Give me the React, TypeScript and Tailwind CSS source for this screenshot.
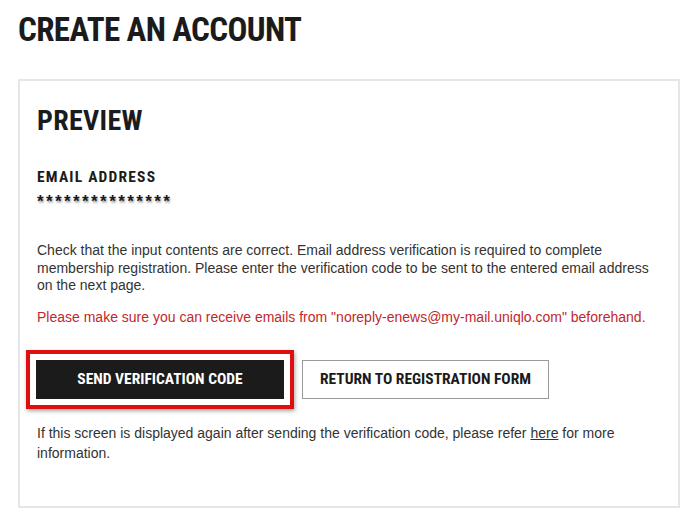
export default function App() {
  return (
    <div className="min-h-[527px] w-[700px] bg-white">
      <div className="px-[18px] pt-[13px]">
        <h1 className="font-['Roboto_Condensed',Roboto,sans-serif] text-[33px] font-bold leading-[34px] tracking-[-0.6px] text-[#1b1b1b]">
          CREATE AN ACCOUNT
        </h1>

        <div className="mt-[32px] h-[429px] w-[662px] border-2 border-[#e6e6e6] px-[17px] pt-[25px]">
          <h2 className="font-['Roboto_Condensed',Roboto,sans-serif] text-[28px] font-bold leading-[30px] tracking-[0.3px] text-[#1b1b1b]">
            PREVIEW
          </h2>

          <div className="mt-[33px]">
            <div className="font-['Roboto_Condensed',Roboto,sans-serif] text-[15.5px] font-bold leading-[16px] tracking-[1.2px] text-[#1b1b1b]">
              EMAIL ADDRESS
            </div>
            <div className="mt-[9px] font-['Liberation_Sans',Arial,sans-serif] text-[17px] font-bold leading-[16px] tracking-[2.4px] text-[#1b1b1b] [text-shadow:1px_2px_2px_rgba(0,0,0,0.35)]">
              ***************
            </div>
          </div>

          <p className="mt-[32px] w-[625px] font-['Liberation_Sans',Arial,sans-serif] text-[14px] leading-[17.5px] text-[#333333]">
            Check that the input contents are correct. Email address verification is required to complete
            membership registration. Please enter the verification code to be sent to the entered email address
            on the next page.
          </p>

          <p className="mt-[14px] font-['Liberation_Sans',Arial,sans-serif] text-[14px] leading-[17.5px] text-[#c0282d]">
            Please make sure you can receive emails from "noreply-enews@my-mail.uniqlo.com" beforehand.
          </p>

          <div className="-ml-[11px] mt-[24px] flex items-center gap-[8px]">
            <div className="border-4 border-[#e00f0f] p-[6px] shadow-[1px_2px_4px_rgba(0,0,0,0.35)]">
              <button className="flex h-[39px] w-[248px] items-center justify-center bg-[#1b1b1b] font-['Roboto_Condensed',Roboto,sans-serif] text-[15.5px] font-bold text-white">
                SEND VERIFICATION CODE
              </button>
            </div>
            <button className="flex h-[39px] w-[247px] items-center justify-center border border-[#9a9a9a] bg-white font-['Roboto_Condensed',Roboto,sans-serif] text-[15.5px] font-bold text-[#1b1b1b]">
              RETURN TO REGISTRATION FORM
            </button>
          </div>

          <p className="mt-[14px] font-['Liberation_Sans',Arial,sans-serif] text-[14px] leading-[20px] text-[#333333]">
            If this screen is displayed again after sending the verification code, please refer{' '}
            <a className="underline">here</a> for more
            <br />
            information.
          </p>
        </div>
      </div>
    </div>
  )
}
